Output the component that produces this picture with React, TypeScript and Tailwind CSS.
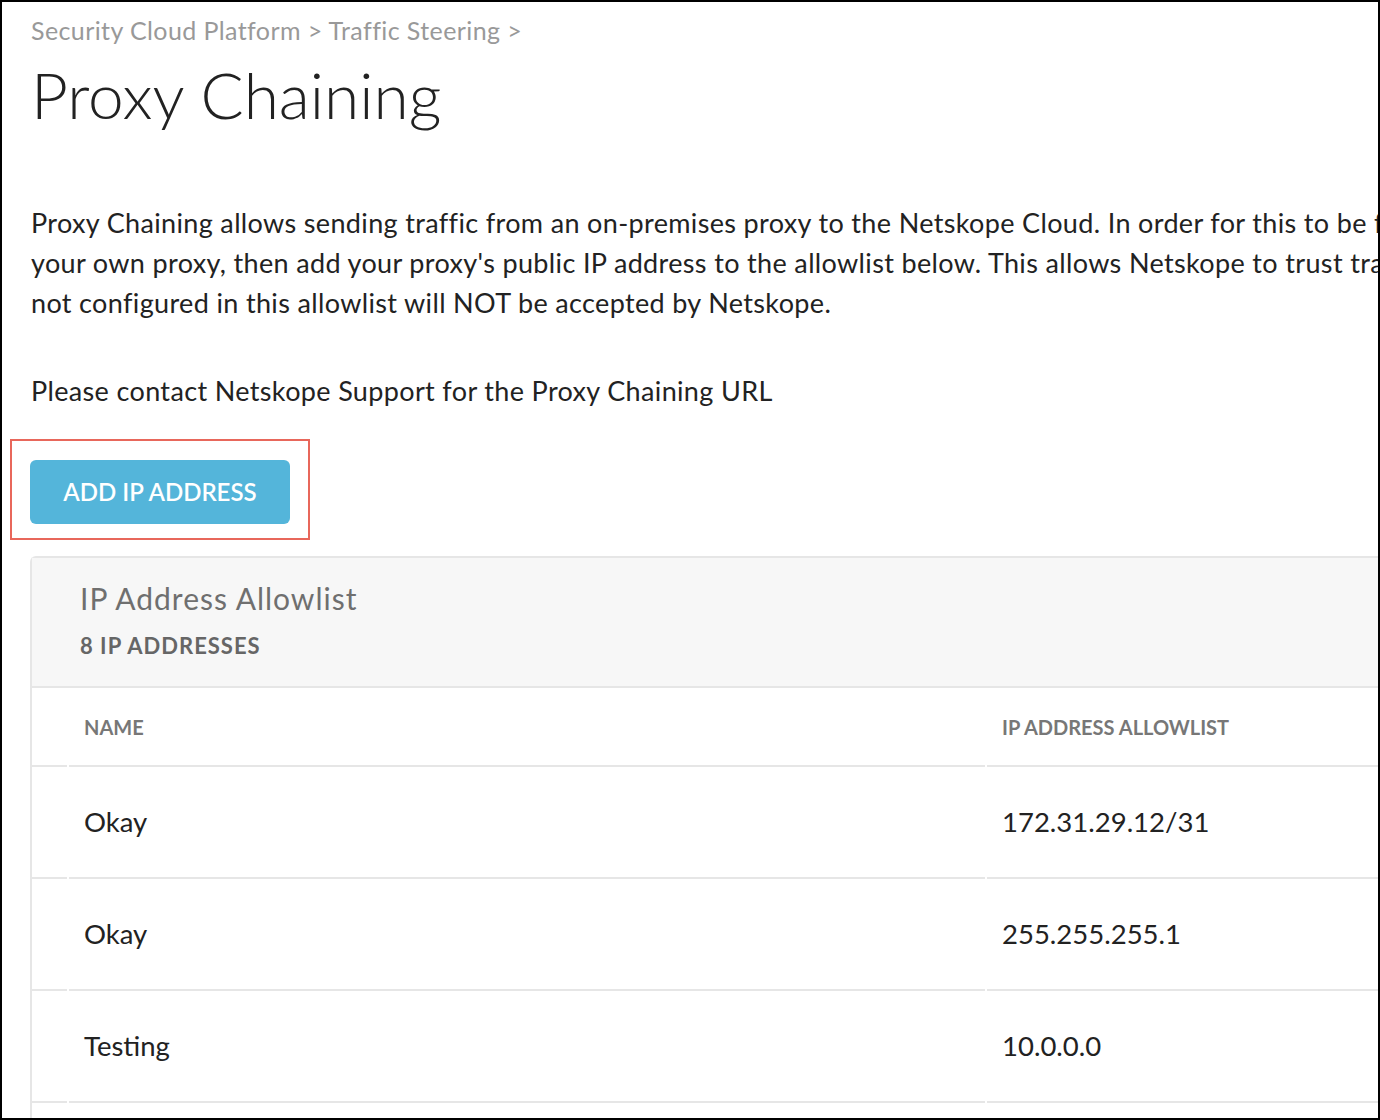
import React from "react";

const rows = [
  { name: "Okay", ip: "172.31.29.12/31" },
  { name: "Okay", ip: "255.255.255.1" },
  { name: "Testing", ip: "10.0.0.0" },
  { name: "", ip: "" },
];

export default function App() {
  return (
    <div className="w-[1380px] h-[1120px] border-2 border-black overflow-hidden bg-white font-['Lato','Liberation_Sans',sans-serif] text-[#222]">
      <div className="pl-[29px] pt-[12px]">
        {/* breadcrumb + title */}
        <div className="text-[25px] leading-[32px] tracking-[0.4px] text-[#999] whitespace-nowrap">
          Security Cloud Platform &gt; Traffic Steering &gt;
        </div>
        <h1 className="mt-[11px] text-[64px] leading-[76px] font-light whitespace-nowrap">
          Proxy Chaining
        </h1>

        {/* description */}
        <div className="mt-[70px] text-[27px] leading-[40px] tracking-[0.35px] whitespace-nowrap">
          <p>
            Proxy Chaining allows sending traffic from an on-premises proxy to the Netskope Cloud. In order for this to be fully functional, you must first configure
          </p>
          <p>
            your own proxy, then add your proxy's public IP address to the allowlist below. This allows Netskope to trust traffic from your proxy. Traffic from proxies
          </p>
          <p>not configured in this allowlist will NOT be accepted by Netskope.</p>
          <p className="mt-[48px]">Please contact Netskope Support for the Proxy Chaining URL</p>
        </div>

        {/* highlighted button */}
        <div className="mt-[28px] ml-[-21px] w-fit border-2 border-[#e8675b] pt-[19px] pb-[14px] px-[18px]">
          <button className="w-[260px] h-[64px] rounded-[6px] bg-[#54b5da] text-white text-[24px] font-semibold">
            ADD IP ADDRESS
          </button>
        </div>

        {/* allowlist card */}
        <div className="mt-[16px] ml-[-1px] w-[1700px] border-2 border-r-0 border-b-0 border-[#e6e6e6] rounded-tl-[6px]">
          <div className="bg-[#f7f7f7] border-b-2 border-[#e6e6e6] pl-[48px] pt-[22px] pb-[26px]">
            <div className="text-[30px] leading-[36px] tracking-[1px] text-[#6f6f6f]">IP Address Allowlist</div>
            <div className="mt-[16px] text-[22px] leading-[28px] tracking-[1px] font-bold text-[#666]">8 IP ADDRESSES</div>
          </div>

          <div className="grid grid-cols-[35px_916px_1fr] gap-x-[2px]">
            <div className="h-[79px] border-b-2 border-[#e6e6e6]" />
            <div className="h-[79px] border-b-2 border-[#e6e6e6] pl-[15px] flex items-center text-[20px] font-bold text-[#777]">
              NAME
            </div>
            <div className="h-[79px] border-b-2 border-[#e6e6e6] pl-[15px] flex items-center text-[20px] font-bold text-[#777]">
              IP ADDRESS ALLOWLIST
            </div>
            {rows.map((r, i) => (
              <React.Fragment key={i}>
                <div className="h-[112px] border-b-2 border-[#e6e6e6]" />
                <div className="h-[112px] border-b-2 border-[#e6e6e6] pl-[15px] flex items-center text-[27.5px]">
                  {r.name}
                </div>
                <div className="h-[112px] border-b-2 border-[#e6e6e6] pl-[15px] flex items-center text-[27.5px]">
                  {r.ip}
                </div>
              </React.Fragment>
            ))}
          </div>
        </div>
      </div>
    </div>
  );
}
